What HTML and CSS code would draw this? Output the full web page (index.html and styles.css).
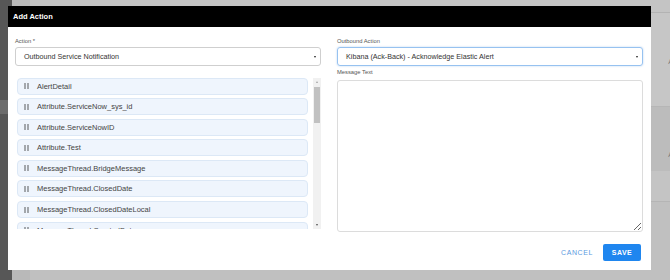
FILE: index.html
```html
<!DOCTYPE html>
<html>
<head>
<meta charset="utf-8">
<link rel="stylesheet" href="styles.css">
</head>
<body>
<div class="page">
  <aside class="side"><div class="side-top"></div><div class="side-hi"></div></aside>
  <div class="gutter"></div>
  <main class="main">
    <div class="bg-row r1"></div>
    <div class="bg-row r2"><span class="peek p1">A</span><span class="peek p2">•</span></div>
    <div class="bg-row r3"><span class="peek p3">A</span></div>
    <div class="bg-row r4"></div>
    <div class="bg-row r5"></div>
  </main>
</div>

<div class="modal">
  <div class="modal-header">Add Action</div>
  <div class="modal-body">
    <div class="col">
      <div class="label">Action *</div>
      <div class="select"><span>Outbound Service Notification</span><i class="caret"></i></div>
      <div class="list-wrap">
        <div class="list">
          <div class="item"><svg class="handle" viewBox="0 0 5 6" width="5" height="6"><circle cx="1" cy="1" r="0.75"/><circle cx="4" cy="1" r="0.75"/><circle cx="1" cy="3" r="0.75"/><circle cx="4" cy="3" r="0.75"/><circle cx="1" cy="5" r="0.75"/><circle cx="4" cy="5" r="0.75"/></svg>AlertDetail</div>
          <div class="item"><svg class="handle" viewBox="0 0 5 6" width="5" height="6"><circle cx="1" cy="1" r="0.75"/><circle cx="4" cy="1" r="0.75"/><circle cx="1" cy="3" r="0.75"/><circle cx="4" cy="3" r="0.75"/><circle cx="1" cy="5" r="0.75"/><circle cx="4" cy="5" r="0.75"/></svg>Attribute.ServiceNow_sys_id</div>
          <div class="item"><svg class="handle" viewBox="0 0 5 6" width="5" height="6"><circle cx="1" cy="1" r="0.75"/><circle cx="4" cy="1" r="0.75"/><circle cx="1" cy="3" r="0.75"/><circle cx="4" cy="3" r="0.75"/><circle cx="1" cy="5" r="0.75"/><circle cx="4" cy="5" r="0.75"/></svg>Attribute.ServiceNowID</div>
          <div class="item"><svg class="handle" viewBox="0 0 5 6" width="5" height="6"><circle cx="1" cy="1" r="0.75"/><circle cx="4" cy="1" r="0.75"/><circle cx="1" cy="3" r="0.75"/><circle cx="4" cy="3" r="0.75"/><circle cx="1" cy="5" r="0.75"/><circle cx="4" cy="5" r="0.75"/></svg>Attribute.Test</div>
          <div class="item"><svg class="handle" viewBox="0 0 5 6" width="5" height="6"><circle cx="1" cy="1" r="0.75"/><circle cx="4" cy="1" r="0.75"/><circle cx="1" cy="3" r="0.75"/><circle cx="4" cy="3" r="0.75"/><circle cx="1" cy="5" r="0.75"/><circle cx="4" cy="5" r="0.75"/></svg>MessageThread.BridgeMessage</div>
          <div class="item"><svg class="handle" viewBox="0 0 5 6" width="5" height="6"><circle cx="1" cy="1" r="0.75"/><circle cx="4" cy="1" r="0.75"/><circle cx="1" cy="3" r="0.75"/><circle cx="4" cy="3" r="0.75"/><circle cx="1" cy="5" r="0.75"/><circle cx="4" cy="5" r="0.75"/></svg>MessageThread.ClosedDate</div>
          <div class="item"><svg class="handle" viewBox="0 0 5 6" width="5" height="6"><circle cx="1" cy="1" r="0.75"/><circle cx="4" cy="1" r="0.75"/><circle cx="1" cy="3" r="0.75"/><circle cx="4" cy="3" r="0.75"/><circle cx="1" cy="5" r="0.75"/><circle cx="4" cy="5" r="0.75"/></svg>MessageThread.ClosedDateLocal</div>
          <div class="item"><svg class="handle" viewBox="0 0 5 6" width="5" height="6"><circle cx="1" cy="1" r="0.75"/><circle cx="4" cy="1" r="0.75"/><circle cx="1" cy="3" r="0.75"/><circle cx="4" cy="3" r="0.75"/><circle cx="1" cy="5" r="0.75"/><circle cx="4" cy="5" r="0.75"/></svg>MessageThread.CreatedDate</div>
        </div>
        <div class="scrollbar">
          <i class="sb-up"></i>
          <div class="sb-track"><div class="sb-thumb"></div></div>
          <i class="sb-down"></i>
        </div>
      </div>
    </div>
    <div class="col">
      <div class="label">Outbound Action</div>
      <div class="select focus"><span>Kibana (Ack-Back) - Acknowledge Elastic Alert</span><i class="caret"></i></div>
      <div class="label">Message Text</div>
      <textarea class="textarea"></textarea>
    </div>
  </div>
  <div class="modal-footer">
    <button class="btn-cancel">CANCEL</button>
    <button class="btn-save">SAVE</button>
  </div>
</div>
</body>
</html>
```

FILE: styles.css
```css
html, body {
  margin: 0;
  padding: 0;
}
body {
  width: 670px;
  height: 280px;
  overflow: hidden;
  background: #c2c2c2;
  font-family: "Liberation Sans", Arial, sans-serif;
}

/* dimmed page behind the dialog */
.page {
  width: 670px;
  height: 280px;
  display: grid;
  grid-template-columns: 12px 18px 1fr;
}
.side {
  background: #575757;
  display: flex;
  flex-direction: column;
}
.side-top {
  height: 100px;
}
.side-hi {
  height: 14px;
  background: #6c6c6c;
}
.gutter {
  background: #b9b9b9;
}
.main {
  background: #c4c4c4;
  display: flex;
  flex-direction: column;
}
.bg-row {
  display: flex;
  flex-direction: column;
  align-items: flex-end;
  position: relative;
}
.r1 { height: 12px; border-bottom: 1px solid #b3b3b3; }
.r2 { height: 93px; background: #c6c6c6; }
.r3 { height: 64px; background: #bcbcbc; border-top: 1px solid #b6b6b6; }
.r4 { height: 30px; border-bottom: 1px solid #b5b5b5; }
.r5 { flex: 1; background: #c0c0c0; }
.peek {
  position: absolute;
  right: -3px;
  font-size: 7px;
  color: #777;
}
.p1 { top: 45px; }
.p2 { top: 78px; }
.p3 { top: 44px; }

/* dialog */
.modal {
  position: absolute;
  left: 8px;
  top: 6px;
  width: 643px;
  height: 264px;
  background: #fff;
  display: flex;
  flex-direction: column;
}
.modal-header {
  height: 21px;
  flex: none;
  background: #000;
  color: #fff;
  font-weight: bold;
  font-size: 7.5px;
  padding-left: 5px;
  display: flex;
  align-items: center;
}
.modal-body {
  flex: 1;
  min-height: 0;
  display: grid;
  grid-template-columns: 306px 306px;
  column-gap: 16px;
  padding: 8px 8px 0 7px;
}
.col {
  display: flex;
  flex-direction: column;
  min-height: 0;
}
.label {
  height: 12px;
  line-height: 12px;
  font-size: 5.8px;
  color: #555;
}
.select {
  box-sizing: border-box;
  height: 19px;
  flex: none;
  border: 1px solid #cfcfcf;
  border-radius: 3px;
  font-size: 7.2px;
  color: #333;
  padding: 0 4px 0 8px;
  display: flex;
  align-items: center;
  justify-content: space-between;
}
.select.focus {
  height: 19px;
  border-color: #97c2f0;
  box-shadow: 0 0 2px rgba(90, 150, 225, 0.45);
}
.caret {
  width: 0;
  height: 0;
  border-left: 1.6px solid transparent;
  border-right: 1.6px solid transparent;
  border-top: 2.6px solid #222;
}

.list-wrap {
  margin-top: 11px;
  height: 152px;
  display: flex;
  gap: 5px;
}
.list {
  flex: 1;
  overflow: hidden;
  padding: 0.5px 0 0 2px;
}
.item {
  box-sizing: border-box;
  height: 17px;
  margin-bottom: 3.6px;
  border: 1px solid #dce8f6;
  background: #eff5fd;
  border-radius: 4px;
  display: flex;
  align-items: center;
  padding-left: 6px;
  font-size: 7.5px;
  color: #444;
  white-space: nowrap;
}
.handle {
  fill: #333;
  margin-right: 8px;
  flex: none;
}
.scrollbar {
  width: 8px;
  margin-top: 1px;
  margin-bottom: 0;
  background: #f1f1f1;
  display: flex;
  flex-direction: column;
  align-items: center;
}
.sb-up, .sb-down {
  width: 0;
  height: 0;
  margin: 3px 0;
  border-left: 1.5px solid transparent;
  border-right: 1.5px solid transparent;
}
.sb-up { border-bottom: 2px solid #a3a3a3; }
.sb-down { border-top: 2px solid #505050; }
.sb-track {
  flex: 1;
  width: 100%;
  display: flex;
  justify-content: center;
}
.sb-thumb {
  margin-top: 1px;
  width: 6px;
  height: 36px;
  background: #c1c1c1;
}

.textarea {
  box-sizing: border-box;
  margin: 2px 0 0;
  height: 152px;
  width: 100%;
  border: 1px solid #dcdcdc;
  border-radius: 3px;
  resize: vertical;
  padding: 4px;
  font-family: inherit;
  outline: none;
}

.modal-footer {
  height: 38px;
  flex: none;
  box-sizing: border-box;
  padding: 12px 10px 9px 0;
  display: flex;
  justify-content: flex-end;
  align-items: center;
  gap: 10px;
}
.btn-cancel {
  border: 0;
  background: transparent;
  padding: 0;
  font-family: inherit;
  font-size: 7px;
  letter-spacing: 0.6px;
  color: #5b9ae0;
}
.btn-save {
  border: 0;
  border-radius: 2px;
  background: #1f86ef;
  color: #fff;
  height: 17px;
  width: 38px;
  padding: 0;
  font-family: inherit;
  font-size: 7px;
  font-weight: bold;
  letter-spacing: 0.5px;
}
```
